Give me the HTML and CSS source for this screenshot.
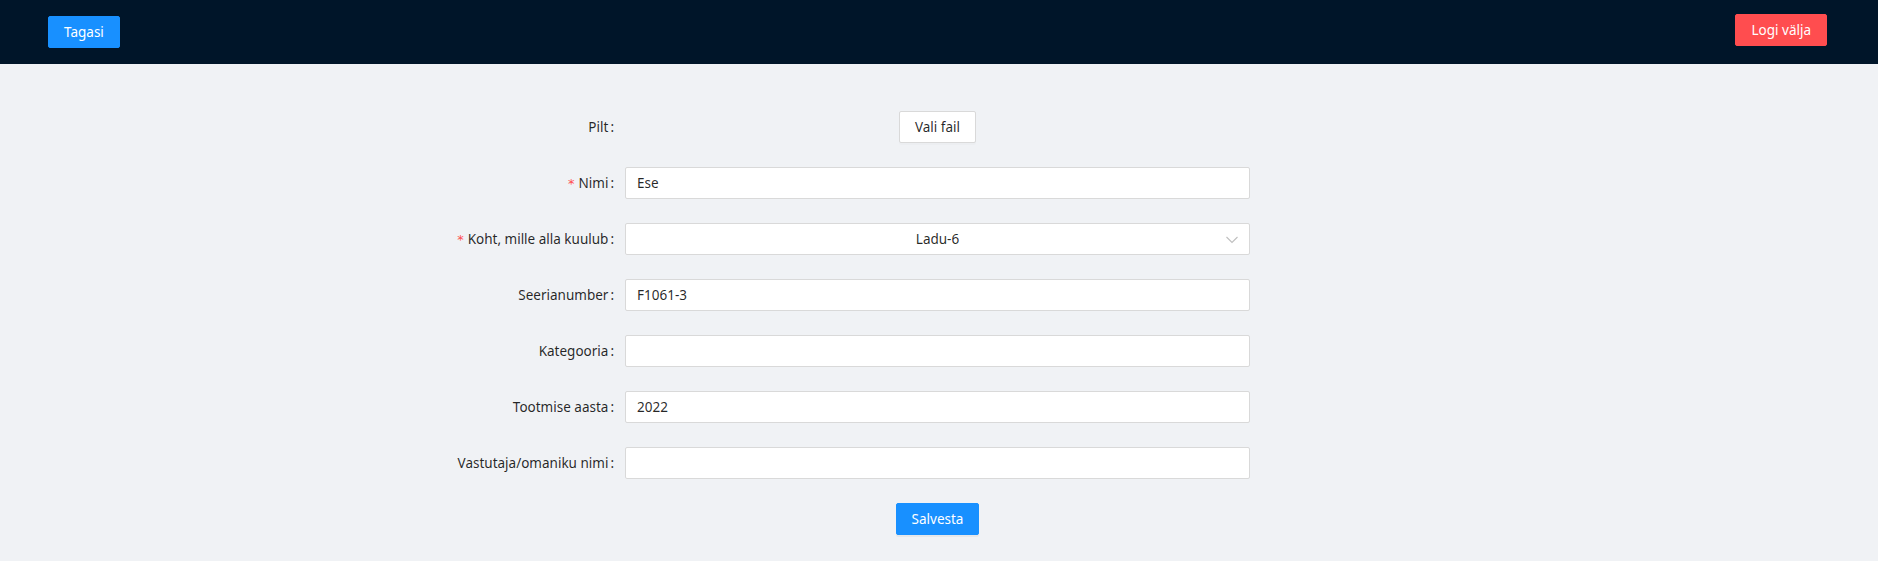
FILE: index.html
```html
<!DOCTYPE html>
<html lang="et">
<head>
    <meta charset="UTF-8">
    <meta name="viewport" content="width=device-width, initial-scale=1.0">
    <title>Ese</title>
    <link rel="stylesheet" href="styles.css">
</head>
<body>

    <div class="header">
        <button class="btn btn-primary back-btn">Tagasi</button>
        <button class="btn btn-danger logout-btn">Logi välja</button>
    </div>

    <div class="content">
        <form class="item-form">
            <div class="form-item">
                <label class="form-label">Pilt</label>
                <div class="form-control center">
                    <button type="button" class="btn btn-default">Vali fail</button>
                </div>
            </div>

            <div class="form-item">
                <label class="form-label required">Nimi</label>
                <div class="form-control">
                    <input type="text" class="input" value="Ese">
                </div>
            </div>

            <div class="form-item">
                <label class="form-label required">Koht, mille alla kuulub</label>
                <div class="form-control">
                    <div class="select">
                        <span class="select-value">Ladu-6</span>
                        <svg class="select-arrow" viewBox="0 0 12 8" width="12" height="8">
                            <path d="M0.5 1 L6 6.5 L11.5 1" fill="none" stroke="#bfbfbf" stroke-width="1.1"/>
                        </svg>
                    </div>
                </div>
            </div>

            <div class="form-item">
                <label class="form-label">Seerianumber</label>
                <div class="form-control">
                    <input type="text" class="input" value="F1061-3">
                </div>
            </div>

            <div class="form-item">
                <label class="form-label">Kategooria</label>
                <div class="form-control">
                    <input type="text" class="input" value="">
                </div>
            </div>

            <div class="form-item">
                <label class="form-label">Tootmise aasta</label>
                <div class="form-control">
                    <input type="text" class="input" value="2022">
                </div>
            </div>

            <div class="form-item">
                <label class="form-label">Vastutaja/omaniku nimi</label>
                <div class="form-control">
                    <input type="text" class="input" value="">
                </div>
            </div>

            <div class="form-item">
                <div></div>
                <div class="form-control center">
                    <button type="button" class="btn btn-primary">Salvesta</button>
                </div>
            </div>
        </form>
    </div>

</body>
</html>
```

FILE: styles.css
```css
body {
    margin: 0;
    padding: 0;
    font-family: "Noto Sans", "Open Sans", sans-serif;
    font-size: 13.5px;
    color: rgba(0, 0, 0, 0.85);
    background-color: #f0f2f5;
    height: 561px;
}

.header {
    height: 64px;
    background-color: #001529;
    display: flex;
    justify-content: space-between;
    align-items: flex-start;
    padding: 0 51px 0 48px;
}

.btn {
    height: 32px;
    padding: 0 15px;
    border: 1px solid transparent;
    border-radius: 2px;
    font-family: inherit;
    font-size: 13.5px;
    line-height: 30px;
    white-space: nowrap;
    cursor: pointer;
}

.btn-primary {
    background-color: #1890ff;
    border-color: #1890ff;
    color: #fff;
    box-shadow: 0 2px 0 rgba(0, 0, 0, 0.045);
}

.btn-danger {
    background-color: #ff4d4f;
    border-color: #ff4d4f;
    color: #fff;
}

.btn-default {
    background-color: #fff;
    border-color: #d9d9d9;
    color: rgba(0, 0, 0, 0.85);
    box-shadow: 0 2px 0 rgba(0, 0, 0, 0.015);
}

.back-btn {
    margin-top: 16px;
}

.logout-btn {
    margin-top: 14px;
}

.content {
    padding-top: 47px;
}

.form-item {
    display: grid;
    grid-template-columns: 625px 625px;
    align-items: center;
    margin-bottom: 24px;
}

.form-label {
    text-align: right;
    padding-right: 11px;
    white-space: nowrap;
}

.form-label::after {
    content: ":";
    margin-left: 2px;
}

.form-label.required::before {
    content: "*";
    color: #ff4d4f;
    margin-right: 4px;
    font-family: "DejaVu Sans", sans-serif;
    font-size: 13px;
}

.form-control.center {
    text-align: center;
}

.input {
    box-sizing: border-box;
    width: 100%;
    height: 32px;
    padding: 4px 11px;
    border: 1px solid #d9d9d9;
    border-radius: 2px;
    background-color: #fff;
    font-family: inherit;
    font-size: 13.5px;
    color: rgba(0, 0, 0, 0.85);
    outline: none;
}

.select {
    box-sizing: border-box;
    height: 32px;
    border: 1px solid #d9d9d9;
    border-radius: 2px;
    background-color: #fff;
    display: flex;
    align-items: center;
    justify-content: center;
    position: relative;
}

.select-arrow {
    position: absolute;
    right: 11px;
    top: 12px;
}
```
